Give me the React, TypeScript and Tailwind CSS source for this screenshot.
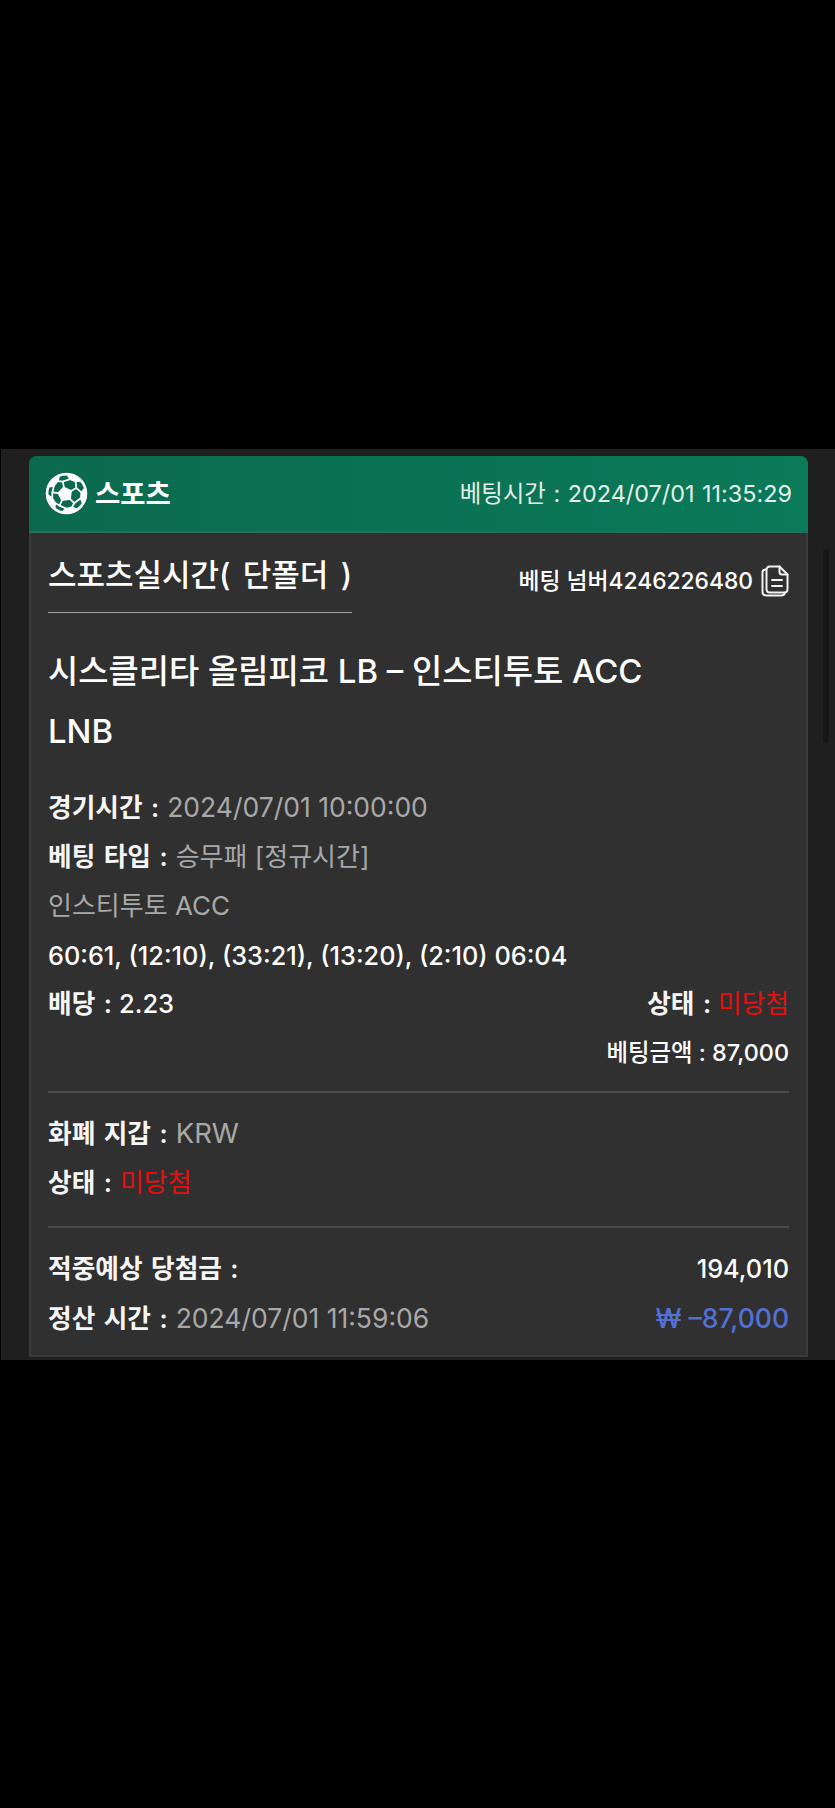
import React from "react";

function Ball() {
  const rad = Math.PI / 180;
  const a0 = -100;
  const c = { x: 19.6, y: 21.6 };
  const pol = (o: { x: number; y: number }, r: number, deg: number) =>
    `${(o.x + r * Math.cos(deg * rad)).toFixed(2)} ${(o.y + r * Math.sin(deg * rad)).toFixed(2)}`;
  const center = { x: 21, y: 21 };
  const k = [0, 1, 2, 3, 4];
  const pent = k.map((i) => pol(c, 6.6, a0 + 72 * i)).join(" L");
  const spokes = k.map((i) => `M${pol(c, 6.6, a0 + 72 * i)} L${pol(c, 12.5, a0 + 72 * i)}`).join(" ");
  const links = k
    .map((i) => {
      const th = a0 + 36 + 72 * i;
      return `M${pol(c, 12.5, a0 + 72 * i)} L${pol(center, 14.5, th - 12)} M${pol(c, 12.5, a0 + 72 * (i + 1))} L${pol(center, 14.5, th + 12)}`;
    })
    .join(" ");
  const patches = k.map((i) => {
    const th = a0 + 36 + 72 * i;
    return `M${pol(center, 19, th - 24)} L${pol(center, 14.5, th - 12)} L${pol(center, 15, th + 12)} L${pol(center, 19, th + 24)} Z`;
  });
  return (
    <svg width="43" height="43" viewBox="0 0 42 42" fill="none" stroke="#fff" strokeWidth="1.7" strokeLinejoin="round" strokeLinecap="round">
      <circle cx="21" cy="21" r="19" strokeWidth="2.6" />
      <path d={`M${pent} Z`} fill="#fff" />
      <path d={spokes} />
      <path d={links} />
      {patches.map((d, i) => (
        <path key={i} d={d} fill="#fff" />
      ))}
    </svg>
  );
}

function CopyIcon() {
  return (
    <svg width="28" height="32" viewBox="0 0 28 32" fill="none" stroke="#f2f2f2" strokeWidth="2" strokeLinejoin="round" strokeLinecap="round">
      <path d="M5 4.5H4.5C2.5 4.5 1.5 5.8 1.5 7.5V26.5C1.5 29 3 30.5 5.5 30.5H20C22 30.5 23.5 29.5 24 28" />
      <path d="M9 1.5H18.5L26.5 9.5V24C26.5 26.5 25.5 27.5 23 27.5H9C6.5 27.5 5.5 26.5 5.5 24V5C5.5 2.5 6.5 1.5 9 1.5Z" />
      <path d="M18.5 1.5V7C18.5 8.8 19.7 9.5 21 9.5H26.5" />
      <path d="M11 15H21M11 21H21" />
    </svg>
  );
}

function Row({ className = "", children }: { className?: string; children: React.ReactNode }) {
  return <div className={`h-[49px] flex items-center justify-between leading-[49px] whitespace-nowrap ${className}`}>{children}</div>;
}

function Label({ children }: { children: React.ReactNode }) {
  return <span className="font-semibold text-[#f6f6f6] text-[25.7px] [word-spacing:2px]">{children}</span>;
}

function Gray({ className = "text-[26.5px]", children }: { className?: string; children: React.ReactNode }) {
  return <span className={`text-[#a8a8a8] ${className}`}>{children}</span>;
}

export default function App() {
  return (
    <div className="w-[835px] h-[1808px] bg-black overflow-hidden pt-[449px] font-['Inter','Noto_Sans_CJK_KR',sans-serif] text-white">
      <div className="relative h-[911px] bg-[#1f1f1f] border-l border-black pl-[28px] pr-[27px] pt-[7px]">
        <div className="absolute right-[6px] top-[100px] w-[6px] h-[194px] rounded-full bg-[#171717]" />
        <div className="h-[901px] rounded-t-[8px] bg-[#303030] border-x-2 border-b-2 border-[#3a3b3d]">
          <div className="-mx-[2px] h-[77px] rounded-t-[8px] bg-gradient-to-r from-[#0b6a4e] to-[#0a7a59] border-b-2 border-[#2e6a64] flex items-center justify-between pl-[16px] pr-[16px]">
            <div className="flex items-center gap-[7px]">
              <Ball />
              <span className="text-[27.5px] font-semibold leading-[30px]">스포츠</span>
            </div>
            <span className="text-[23.4px] text-[#e4efe9] leading-[30px] [word-spacing:1px]">베팅시간 : 2024/07/01 11:35:29</span>
          </div>
          <div className="px-[17px]">
            <div className="flex items-start justify-between">
              <div className="mt-[20px] h-[60px] border-b border-[#a0a0a0] text-[31px] font-medium leading-[44px] whitespace-nowrap [word-spacing:4px]">스포츠실시간( 단폴더 )</div>
              <div className="mt-[32px] flex items-center gap-[8px] text-[22.8px] font-medium leading-[30px] whitespace-nowrap">
                베팅 넘버4246226480
                <CopyIcon />
              </div>
            </div>
            <div className="mt-[28px] text-[32.9px] font-medium leading-[60px] w-[660px]">
              시스클리타 올림피코 LB – 인스티투토 ACC LNB
            </div>
            <div className="mt-[22px]">
              <Row className="justify-start gap-[8px]">
                <Label>경기시간 :</Label>
                <Gray>2024/07/01 10:00:00</Gray>
              </Row>
              <Row className="justify-start gap-[8px]">
                <Label>베팅 타입 :</Label>
                <Gray className="text-[26px]">승무패 [정규시간]</Gray>
              </Row>
              <Row><Gray className="text-[26px]">인스티투토 ACC</Gray></Row>
              <Row className="font-medium text-[25.3px] pt-[1px]">60:61, (12:10), (33:21), (13:20), (2:10) 06:04</Row>
              <Row>
                <span className="flex items-center gap-[7px]">
                  <Label>배당 :</Label>
                  <span className="font-medium text-[25.5px]">2.23</span>
                </span>
                <span className="flex items-center gap-[7px]">
                  <Label>상태 :</Label>
                  <span className="text-[#e50f0f] text-[25.7px]">미당첨</span>
                </span>
              </Row>
              <Row className="justify-end font-medium text-[23.4px]">베팅금액 : 87,000</Row>
            </div>
            <div className="mt-[14px] h-[2px] bg-[#4a4a4a]" />
            <div className="mt-[16px]">
              <Row className="justify-start gap-[8px]">
                <Label>화폐 지갑 :</Label>
                <Gray className="text-[27.5px]">KRW</Gray>
              </Row>
              <Row className="justify-start gap-[8px]">
                <Label>상태 :</Label>
                <span className="text-[#e50f0f] text-[26px]">미당첨</span>
              </Row>
            </div>
            <div className="mt-[19px] h-[2px] bg-[#4a4a4a]" />
            <div className="mt-[16px]">
              <Row>
                <Label>적중예상 당첨금 :</Label>
                <span className="font-medium text-[25.3px]">194,010</span>
              </Row>
              <Row className="pt-[1px]">
                <span className="flex items-center gap-[8px]">
                  <Label>정산 시간 :</Label>
                  <Gray>2024/07/01 11:59:06</Gray>
                </span>
                <span className="font-medium text-[26.5px] text-[#5470d6]">₩ –87,000</span>
              </Row>
            </div>
          </div>
        </div>
      </div>
    </div>
  );
}
